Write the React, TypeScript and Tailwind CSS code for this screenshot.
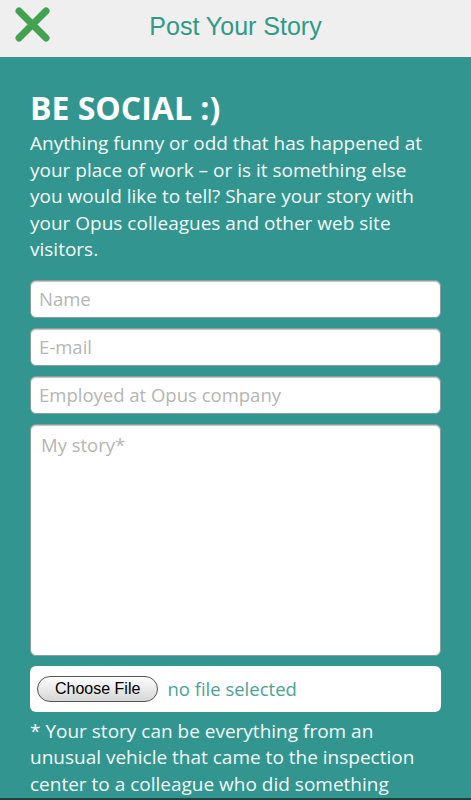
import React from "react";

export default function App() {
  const body = { fontFamily: '"Open Sans", "DejaVu Sans", sans-serif' };
  const inputCls =
    "w-full h-[38px] rounded-[6px] bg-white border border-[#8a9e9c] shadow-[inset_0_1px_1px_rgba(0,0,0,0.25)] px-[8px] text-[18.5px] text-[#333] placeholder:text-[#b5b5b5] outline-none";
  return (
    <div className="min-h-screen bg-[#33958f]" style={body}>
      <header className="h-[57px] bg-[#efefef] relative">
        <svg
          className="absolute left-[15px] top-[7px]"
          width="35"
          height="35"
          viewBox="0 0 35 35"
        >
          <path
            d="M4 4 L31 31 M31 4 L4 31"
            stroke="#43a24f"
            strokeWidth="7"
            strokeLinecap="round"
          />
        </svg>
        <h1
          className="pt-[12px] w-full text-center text-[25px] text-[#2f9a86] leading-[28px]"
          style={{ fontFamily: '"Liberation Sans", Arial, sans-serif' }}
        >
          Post Your Story
        </h1>
      </header>
      <main className="px-[30px] pt-[31px]">
        <h2 className="text-[32px] font-bold text-white leading-[40px]">
          BE SOCIAL :)
        </h2>
        <p className="mt-[2px] text-[19px] leading-[26.5px] text-[#f2fbfa] whitespace-nowrap">
          Anything funny or odd that has happened at
          <br />
          your place of work – or is it something else
          <br />
          you would like to tell? Share your story with
          <br />
          your Opus colleagues and other web site
          <br />
          visitors.
        </p>
        <div className="mt-[17px] flex flex-col gap-[10px] w-[411px]">
          <input className={inputCls} placeholder="Name" style={body} />
          <input className={inputCls} placeholder="E-mail" style={body} />
          <input
            className={inputCls}
            placeholder="Employed at Opus company"
            style={body}
          />
          <textarea
            className="w-full h-[232px] rounded-[6px] bg-white border border-[#8a9e9c] shadow-[inset_0_1px_1px_rgba(0,0,0,0.25)] px-[10px] py-[6px] text-[18.5px] text-[#333] placeholder:text-[#b5b5b5] outline-none resize-none"
            placeholder="My story*"
            style={body}
          />
          <div className="h-[46px] rounded-[6px] bg-white flex items-center px-[7px] gap-[9px]">
            <span
              className="h-[26px] px-[17px] rounded-full border border-[#555] bg-gradient-to-b from-[#fdfdfd] to-[#d6d6d6] text-[16px] text-black flex items-center"
              style={{ fontFamily: '"Liberation Sans", Arial, sans-serif' }}
            >
              Choose File
            </span>
            <span className="text-[18.5px] text-[#4aa39a]">no file selected</span>
          </div>
        </div>
        <p className="mt-[6px] text-[19px] leading-[26.5px] text-[#f2fbfa] pb-[40px] whitespace-nowrap">
          * Your story can be everything from an
          <br />
          unusual vehicle that came to the inspection
          <br />
          center to a colleague who did something
          <br />
          funny or odd at work.
        </p>
      </main>
      <div className="fixed bottom-0 left-0 right-0 h-[2px] bg-[#1d3f3d]" />
    </div>
  );
}
